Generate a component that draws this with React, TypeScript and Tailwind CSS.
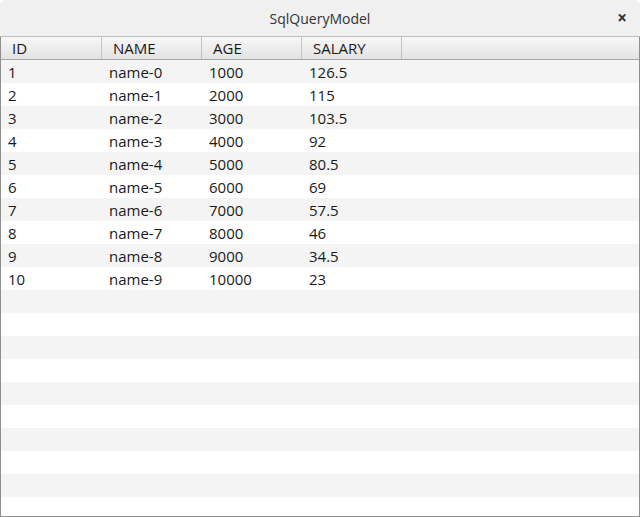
import React from "react";

const rows = [
  ["1", "name-0", "1000", "126.5"],
  ["2", "name-1", "2000", "115"],
  ["3", "name-2", "3000", "103.5"],
  ["4", "name-3", "4000", "92"],
  ["5", "name-4", "5000", "80.5"],
  ["6", "name-5", "6000", "69"],
  ["7", "name-6", "7000", "57.5"],
  ["8", "name-7", "8000", "46"],
  ["9", "name-8", "9000", "34.5"],
  ["10", "name-9", "10000", "23"],
];

const headers = ["ID", "NAME", "AGE", "SALARY"];

export default function App() {
  const filler = Array.from({ length: 10 }, (_, i) => i + 10);
  return (
    <div
      className="w-[640px] h-[517px] overflow-hidden bg-white flex flex-col"
      style={{ fontFamily: '"Open Sans", "Noto Sans", sans-serif' }}
    >
      {/* title bar */}
      <div className="h-[37px] shrink-0 bg-[#f0f0f0] rounded-t-[6px] border-b border-[#bdbdbd] flex items-center relative">
        <div className="flex-1 text-center text-[14px] text-[#2e3436]">SqlQueryModel</div>
        <span className="absolute right-[13px] top-[9px] text-[17px] font-bold text-[#2e3436] leading-none">×</span>
      </div>

      {/* table */}
      <div className="flex-1 flex flex-col border-x border-b border-[#8f8f8f] overflow-hidden">
        <div className="h-[23px] shrink-0 flex bg-gradient-to-b from-[#f7f7f7] to-[#e3e3e3] border-b border-[#a5a5a5]">
          {headers.map((h, j) => (
            <div
              key={h}
              className={`${j === 0 ? "w-[101px]" : "w-[100px]"} shrink-0 border-r border-[#c4c4c4] pl-[11px] text-[15px] leading-[22px] text-[#1a1a1a]`}
            >
              {h}
            </div>
          ))}
          <div className="flex-1" />
        </div>
        {rows.map((r, i) => (
          <div
            key={i}
            className={`h-[23px] shrink-0 flex text-[15px] leading-[24px] text-[#1a1a1a] ${
              i % 2 === 0 ? "bg-[#f4f4f4]" : "bg-white"
            }`}
          >
            {r.map((c, j) => (
              <div key={j} className={`${j === 0 ? "w-[101px]" : "w-[100px]"} shrink-0 pl-[7px]`}>
                {c}
              </div>
            ))}
          </div>
        ))}
        {filler.map((i) => (
          <div
            key={i}
            className={`h-[23px] shrink-0 ${i % 2 === 0 ? "bg-[#f4f4f4]" : "bg-white"}`}
          />
        ))}
      </div>
    </div>
  );
}
